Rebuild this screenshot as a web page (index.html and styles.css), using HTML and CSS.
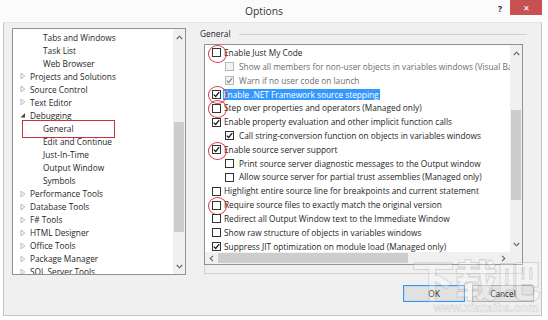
FILE: index.html
```html
<!DOCTYPE html>
<html>
<head>
<meta charset="utf-8">
<title>Options</title>
<link rel="stylesheet" href="styles.css">
</head>
<body>
<div class="win">
  <div class="titlebar">
    <div class="title">Options</div>
    <div class="help">?</div>
    <div class="close">&#x2715;</div>
  </div>
  <div class="client">
    <div class="main">
      <div class="tree">
        <div class="tree-list">
          <div class="ti l1">Tabs and Windows</div>
          <div class="ti l1">Task List</div>
          <div class="ti l1">Web Browser</div>
          <div class="ti l0"><span class="arr"><svg width="6" height="8" viewBox="0 0 6 8"><path d="M1 1.2 L4.8 4 L1 6.8 Z" fill="none" stroke="#b0b0b0" stroke-width="0.9"/></svg></span>Projects and Solutions</div>
          <div class="ti l0"><span class="arr"><svg width="6" height="8" viewBox="0 0 6 8"><path d="M1 1.2 L4.8 4 L1 6.8 Z" fill="none" stroke="#b0b0b0" stroke-width="0.9"/></svg></span>Source Control</div>
          <div class="ti l0"><span class="arr"><svg width="6" height="8" viewBox="0 0 6 8"><path d="M1 1.2 L4.8 4 L1 6.8 Z" fill="none" stroke="#b0b0b0" stroke-width="0.9"/></svg></span>Text Editor</div>
          <div class="ti l0"><span class="arr"><svg width="6" height="8" viewBox="0 0 6 8"><path d="M5 2 L5 6.5 L0.5 6.5 Z" fill="#444"/></svg></span>Debugging</div>
          <div class="ti l1 marked">General</div>
          <div class="ti l1">Edit and Continue</div>
          <div class="ti l1">Just-In-Time</div>
          <div class="ti l1">Output Window</div>
          <div class="ti l1">Symbols</div>
          <div class="ti l0"><span class="arr"><svg width="6" height="8" viewBox="0 0 6 8"><path d="M1 1.2 L4.8 4 L1 6.8 Z" fill="none" stroke="#b0b0b0" stroke-width="0.9"/></svg></span>Performance Tools</div>
          <div class="ti l0"><span class="arr"><svg width="6" height="8" viewBox="0 0 6 8"><path d="M1 1.2 L4.8 4 L1 6.8 Z" fill="none" stroke="#b0b0b0" stroke-width="0.9"/></svg></span>Database Tools</div>
          <div class="ti l0"><span class="arr"><svg width="6" height="8" viewBox="0 0 6 8"><path d="M1 1.2 L4.8 4 L1 6.8 Z" fill="none" stroke="#b0b0b0" stroke-width="0.9"/></svg></span>F# Tools</div>
          <div class="ti l0"><span class="arr"><svg width="6" height="8" viewBox="0 0 6 8"><path d="M1 1.2 L4.8 4 L1 6.8 Z" fill="none" stroke="#b0b0b0" stroke-width="0.9"/></svg></span>HTML Designer</div>
          <div class="ti l0"><span class="arr"><svg width="6" height="8" viewBox="0 0 6 8"><path d="M1 1.2 L4.8 4 L1 6.8 Z" fill="none" stroke="#b0b0b0" stroke-width="0.9"/></svg></span>Office Tools</div>
          <div class="ti l0"><span class="arr"><svg width="6" height="8" viewBox="0 0 6 8"><path d="M1 1.2 L4.8 4 L1 6.8 Z" fill="none" stroke="#b0b0b0" stroke-width="0.9"/></svg></span>Package Manager</div>
          <div class="ti l0"><span class="arr"><svg width="6" height="8" viewBox="0 0 6 8"><path d="M1 1.2 L4.8 4 L1 6.8 Z" fill="none" stroke="#b0b0b0" stroke-width="0.9"/></svg></span>SQL Server Tools</div>
        </div>
        <div class="vscroll tree-scroll">
          <div class="sarrow"><svg width="7" height="5" viewBox="0 0 7 5"><path d="M0.8 4 L3.5 1.2 L6.2 4" fill="none" stroke="#606060" stroke-width="1.1"/></svg></div>
          <div class="track"><div class="thumb"></div></div>
          <div class="sarrow"><svg width="7" height="5" viewBox="0 0 7 5"><path d="M0.8 1 L3.5 3.8 L6.2 1" fill="none" stroke="#606060" stroke-width="1.1"/></svg></div>
        </div>
      </div>
      <div class="page">
        <div class="hdr"><span>General</span><div class="rule"></div></div>
        <div class="frame">
          <div class="panel">
            <div class="rows">
              <div class="row"><span class="cb circ"></span>Enable Just My Code</div>
              <div class="row l1 dis"><span class="cb"></span>Show all members for non-user objects in variables windows (Visual Basic only)</div>
              <div class="row l1 dis"><span class="cb"><svg width="7" height="7" viewBox="0 0 7 7"><path d="M0.8 3.6 L2.7 5.5 L6.2 1.2" fill="none" stroke="#8a8a8a" stroke-width="1.3"/></svg></span>Warn if no user code on launch</div>
              <div class="row"><span class="cb circ"><svg width="7" height="7" viewBox="0 0 7 7"><path d="M0.8 3.6 L2.7 5.5 L6.2 1.2" fill="none" stroke="#1a1a1a" stroke-width="1.3"/></svg></span><span class="sel">Enable .NET Framework source stepping</span></div>
              <div class="row"><span class="cb circ"></span>Step over properties and operators (Managed only)</div>
              <div class="row"><span class="cb"><svg width="7" height="7" viewBox="0 0 7 7"><path d="M0.8 3.6 L2.7 5.5 L6.2 1.2" fill="none" stroke="#1a1a1a" stroke-width="1.3"/></svg></span>Enable property evaluation and other implicit function calls</div>
              <div class="row l1"><span class="cb"><svg width="7" height="7" viewBox="0 0 7 7"><path d="M0.8 3.6 L2.7 5.5 L6.2 1.2" fill="none" stroke="#1a1a1a" stroke-width="1.3"/></svg></span>Call string-conversion function on objects in variables windows</div>
              <div class="row"><span class="cb circ"><svg width="7" height="7" viewBox="0 0 7 7"><path d="M0.8 3.6 L2.7 5.5 L6.2 1.2" fill="none" stroke="#1a1a1a" stroke-width="1.3"/></svg></span>Enable source server support</div>
              <div class="row l1"><span class="cb"></span>Print source server diagnostic messages to the Output window</div>
              <div class="row l1"><span class="cb"></span>Allow source server for partial trust assemblies (Managed only)</div>
              <div class="row"><span class="cb"></span>Highlight entire source line for breakpoints and current statement</div>
              <div class="row"><span class="cb circ"></span>Require source files to exactly match the original version</div>
              <div class="row"><span class="cb"></span>Redirect all Output Window text to the Immediate Window</div>
              <div class="row"><span class="cb"></span>Show raw structure of objects in variables windows</div>
              <div class="row"><span class="cb"><svg width="7" height="7" viewBox="0 0 7 7"><path d="M0.8 3.6 L2.7 5.5 L6.2 1.2" fill="none" stroke="#1a1a1a" stroke-width="1.3"/></svg></span>Suppress JIT optimization on module load (Managed only)</div>
            </div>
            <div class="vscroll panel-scroll">
              <div class="sarrow"><svg width="7" height="5" viewBox="0 0 7 5"><path d="M0.8 4 L3.5 1.2 L6.2 4" fill="none" stroke="#606060" stroke-width="1.1"/></svg></div>
              <div class="track"><div class="thumb"></div></div>
              <div class="sarrow"><svg width="7" height="5" viewBox="0 0 7 5"><path d="M0.8 1 L3.5 3.8 L6.2 1" fill="none" stroke="#606060" stroke-width="1.1"/></svg></div>
            </div>
            <div class="hscroll">
              <div class="harrow"><svg width="5" height="7" viewBox="0 0 5 7"><path d="M4 0.8 L1.2 3.5 L4 6.2" fill="none" stroke="#606060" stroke-width="1.1"/></svg></div>
              <div class="htrack"><div class="hthumb"></div></div>
              <div class="harrow"><svg width="5" height="7" viewBox="0 0 5 7"><path d="M1 0.8 L3.8 3.5 L1 6.2" fill="none" stroke="#606060" stroke-width="1.1"/></svg></div>
            </div>
            <div class="corner"></div>
          </div>
        </div>
      </div>
    </div>
    <div class="buttons">
      <button class="btn default">OK</button>
      <button class="btn">Cancel</button>
    </div>
  </div>
  <div class="watermark">
    <div class="wm-big">下载吧</div>
    <div class="wm-url">www.xiazaiba.com</div>
  </div>
</div>
</body>
</html>
```
FILE: styles.css
```css
* { box-sizing: border-box; }
html, body { margin: 0; padding: 0; }
body {
  width: 548px;
  height: 320px;
  overflow: hidden;
  background: #ffffff;
  font-family: "Open Sans", "Noto Sans", sans-serif;
  font-size: 8.3px;
  color: #1e1e1e;
}
.win { position: relative; width: 548px; height: 320px; }

.titlebar {
  height: 22px;
  display: flex;
  align-items: flex-start;
  background: #fbfbfb;
}
.title {
  flex: 1;
  text-align: center;
  padding-left: 38px;
  font-size: 10.3px;
  line-height: 22px;
  color: #333;
}
.help {
  width: 20px;
  text-align: center;
  font-size: 8.5px;
  font-weight: bold;
  line-height: 18px;
  color: #222;
}
.close {
  width: 32px;
  height: 15px;
  margin-right: 6px;
  background: #c75050;
  color: #fff;
  text-align: center;
  font-size: 8px;
  line-height: 15px;
}

.client {
  margin-left: 3px;
  width: 539px;
  height: 294px;
  background: #f0f0f0;
  border: 1px solid #c4c4c4;
  border-top: 1px solid #e4e4e4;
  display: flex;
  flex-direction: column;
}
.main {
  display: flex;
  height: 252px;
  padding: 5px 0 0 8px;
}

.tree {
  width: 174px;
  height: 247px;
  border: 1px solid #8d9199;
  background: #fff;
  display: flex;
  overflow: hidden;
}
.tree-list { flex: 1; padding-top: 1.5px; overflow: hidden; }
.ti {
  position: relative;
  height: 13.05px;
  line-height: 13.05px;
  display: flex;
  align-items: center;
  white-space: nowrap;
}
.ti.l0 { padding-left: 7px; }
.ti.l1 { padding-left: 30px; }
.arr { width: 10px; display: flex; align-items: center; }
.arr svg { display: block; }
.marked::after {
  content: "";
  position: absolute;
  left: 9px;
  top: -1.5px;
  width: 91px;
  height: 16px;
  border: 1px solid #c8323a;
}

.vscroll {
  display: flex;
  flex-direction: column;
  background: #f0f0f0;
}
.tree-scroll { width: 12px; }
.sarrow { height: 16px; display: flex; align-items: center; justify-content: center; }
.sarrow svg { display: block; }
.track { flex: 1; padding: 0 1px; }
.thumb { background: #cdcdcd; }
.tree-scroll .thumb { margin-top: 77px; height: 110px; }

.page {
  margin-left: 14px;
  width: 323px;
  display: flex;
  flex-direction: column;
}
.hdr { height: 16px; display: flex; align-items: flex-start; line-height: 12px; }
.rule { flex: 1; height: 1px; background: #d0d0d0; margin: 6px -4px 0 8px; }

.frame {
  margin-left: 4px;
  width: 319px;
  height: 230px;
  border: 1px solid #d2d2d2;
  border-top: none;
}
.panel {
  margin: 0 -1px;
  height: 221px;
  border: 1px solid #8d9199;
  background: #fff;
  display: grid;
  grid-template-columns: 1fr 12px;
  grid-template-rows: 1fr 12px;
  overflow: hidden;
}
.rows { overflow: hidden; padding-top: 1px; min-width: 0; }
.row {
  height: 13.83px;
  line-height: 13.83px;
  display: flex;
  align-items: center;
  white-space: nowrap;
  padding-left: 7px;
}
.row.l1 { padding-left: 20px; }
.row.dis { color: #6d6d6d; }
.cb {
  position: relative;
  flex: none;
  width: 9px;
  height: 9px;
  border: 1px solid #333;
  background: #fff;
  margin-right: 3px;
  display: flex;
  align-items: center;
  justify-content: center;
}
.row.l1 .cb { margin-right: 5px; }
.row.dis .cb { border-color: #b8b8b8; background: #f4f4f4; }
.cb svg { display: block; }
.circ::after {
  content: "";
  position: absolute;
  left: -5px;
  top: -4.5px;
  width: 17px;
  height: 16px;
  border: 1px solid #d33a40;
  border-radius: 50%;
}
.sel {
  background: #3399ff;
  color: #fff;
  line-height: 11px;
  padding: 0 1px 0 0;
  margin-left: -1px;
}

.panel-scroll { grid-column: 2; grid-row: 1; }
.panel-scroll .thumb { margin-top: 49px; height: 90px; }
.hscroll {
  grid-column: 1;
  grid-row: 2;
  display: flex;
  background: #f0f0f0;
}
.harrow { width: 13px; display: flex; align-items: center; justify-content: center; }
.harrow svg { display: block; }
.htrack { flex: 1; padding: 1px 0; }
.hthumb { width: 190px; height: 100%; background: #cdcdcd; }
.corner { grid-column: 2; grid-row: 2; background: #f0f0f0; }

.buttons {
  display: flex;
  justify-content: flex-end;
  gap: 7px;
  padding-right: 7px;
  margin-top: 10px;
}
.btn {
  width: 62px;
  height: 17px;
  padding: 0;
  border: 1px solid #adadad;
  background: #e1e1e1;
  font-family: "Open Sans", "Noto Sans", sans-serif;
  font-size: 8.3px;
  color: #111;
}
.btn.default {
  border-color: #3c94e6;
  box-shadow: inset 0 0 0 1px #bfdcf7;
}

.watermark {
  position: absolute;
  left: 408px;
  top: 254px;
  width: 136px;
  text-align: center;
  pointer-events: none;
}
.wm-big {
  font-family: "Noto Sans CJK SC", sans-serif;
  font-weight: 900;
  font-size: 43px;
  line-height: 48px;
  color: rgba(255, 255, 255, 0.3);
  -webkit-text-stroke: 0.8px rgba(160, 160, 160, 0.45);
}
.wm-url {
  font-family: "Liberation Sans", sans-serif;
  font-weight: bold;
  font-size: 12px;
  line-height: 12px;
  margin-left: 20px;
  color: rgba(255, 255, 255, 0.3);
  -webkit-text-stroke: 0.5px rgba(160, 160, 160, 0.45);
}
```
